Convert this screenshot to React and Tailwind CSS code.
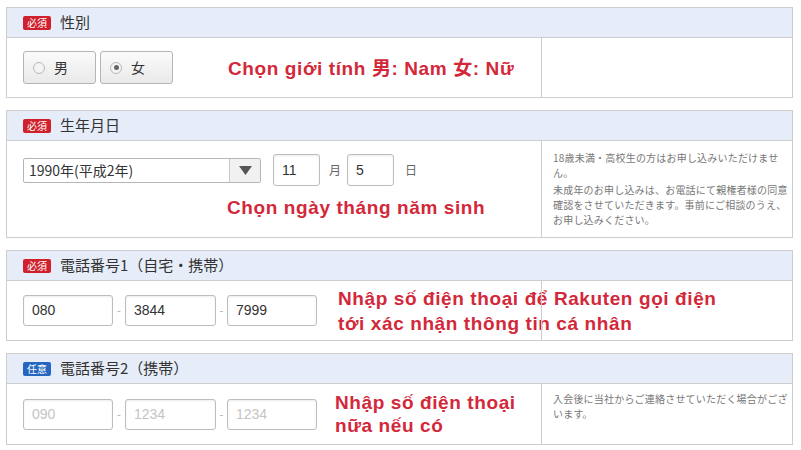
const JP = "font-['Noto_Sans_CJK_JP','Noto_Sans',sans-serif]";
const NOTE = "font-['Liberation_Sans','Noto_Sans_CJK_JP',sans-serif] font-bold text-[19px] tracking-[0.6px] text-[#d3283a] whitespace-nowrap";

function Badge({ kind }) {
  const req = kind === 'req';
  return (
    <span className={`inline-flex h-[14px] w-[28px] items-center justify-center rounded-[2px] text-[10px] leading-none text-white ${req ? 'bg-[#d0202c]' : 'bg-[#2466c0]'}`}>
      {req ? '必須' : '任意'}
    </span>
  );
}

function Section({ kind = 'req', title, body, note, bodyClass = '', noteClass = 'pt-[9px]' }) {
  return (
    <section className={`w-[787px] border border-[#cdcdcd] ${JP}`}>
      <header className="flex h-[30px] items-center gap-[9px] border-b border-[#cdcdcd] bg-[#e6edf8] pl-[16px]">
        <Badge kind={kind} />
        <h2 className="text-[15px] text-[#333]">{title}</h2>
      </header>
      <div className="grid grid-cols-[534px_1fr]">
        <div className={`pl-[16px] ${bodyClass}`}>{body}</div>
        <div className={`relative whitespace-nowrap border-l border-[#cdcdcd] pl-[11px] text-[10px] leading-[15px] tracking-[0.2px] text-[#777] ${noteClass}`}>{note}</div>
      </div>
    </section>
  );
}

function Radio({ label, checked }) {
  return (
    <label className="flex h-[33px] w-[73px] items-center gap-[9px] rounded-[3px] border border-[#b5b5b5] bg-gradient-to-b from-[#fbfbfb] to-[#e9e9e9] pl-[9px] text-[14px] text-[#333]">
      <span className="flex h-[12px] w-[12px] items-center justify-center rounded-full border border-[#b9b9b9] bg-[#f4f4f4]">
        {checked && <span className="h-[5px] w-[5px] rounded-full bg-[#666]" />}
      </span>
      {label}
    </label>
  );
}

function Field({ value, w = 'w-[90px]', h = 'h-[31px]', placeholder }) {
  return (
    <div className={`flex ${w} ${h} items-center rounded-[3px] border border-[#bdbdbd] bg-white pl-[8px] text-[14px] shadow-[inset_0_1px_2px_rgba(0,0,0,0.08)] ${placeholder ? 'text-[#c4c4c4]' : 'text-[#333]'} font-['Liberation_Sans','Noto_Sans_CJK_JP',sans-serif]`}>
      {value}
    </div>
  );
}

function Phone({ values, placeholder }) {
  return (
    <div className="flex items-center">
      <Field value={values[0]} placeholder={placeholder} />
      <span className="w-[12px] text-center text-[11px] text-[#aaa]">-</span>
      <Field value={values[1]} w="w-[91px]" placeholder={placeholder} />
      <span className="w-[11px] text-center text-[11px] text-[#aaa]">-</span>
      <Field value={values[2]} placeholder={placeholder} />
    </div>
  );
}

export default function App() {
  return (
    <div className="flex h-[450px] w-[801px] flex-col gap-[12px] bg-white pl-[6px] pt-[7px]">
      <Section
        title="性別"
        bodyClass="flex h-[59px] items-center"
        body={
          <>
            <div className="flex gap-[4px]">
              <Radio label="男" />
              <Radio label="女" checked />
            </div>
            <p className={`ml-[55px] ${NOTE} leading-none`}>
              Chọn giới tính <span className={JP}>男</span>: Nam <span className={JP}>女</span>: Nữ
            </p>
          </>
        }
      />

      <Section
        title="生年月日"
        bodyClass="h-[96px] pt-[13px]"
        body={
          <>
            <div className="flex items-center">
              <div className="flex h-[25px] w-[238px] items-stretch rounded-[2px] border border-[#b5b5b5] text-[14px] text-[#333]">
                <span className="flex flex-1 items-center pl-[5px]">1990年(平成2年)</span>
                <span className="flex w-[31px] items-center justify-center border-l border-[#c8c8c8] bg-[#f1f1f1]">
                  <svg width="13" height="9" viewBox="0 0 13 9"><path d="M0 0h13L6.5 9z" fill="#555" /></svg>
                </span>
              </div>
              <div className="ml-[12px]"><Field value="11" w="w-[47px]" h="h-[32px]" /></div>
              <span className="ml-[9px] mr-[6px] text-[12px] text-[#666]">月</span>
              <Field value="5" w="w-[47px]" h="h-[32px]" />
              <span className="ml-[11px] text-[12px] text-[#666]">日</span>
            </div>
            <p className={`ml-[204px] mt-[8px] ${NOTE}`}>Chọn ngày tháng năm sinh</p>
          </>
        }
        note={
          <>
            <p>18歳未満・高校生の方はお申し込みいただけませ<br />ん。</p>
            <p className="mt-[2px]">未成年のお申し込みは、お電話にて親権者様の同意<br />確認をさせていただきます。事前にご相談のうえ、<br />お申し込みください。</p>
          </>
        }
      />

      <Section
        title="電話番号1（自宅・携帯）"
        bodyClass="flex h-[59px] items-center"
        body={
          <>
            <Phone values={['080', '3844', '7999']} />
            <p className={`ml-[21px] ${NOTE} leading-[25px]`}>
              Nhập số điện thoại để Rakuten gọi điện
              <br />
              tới xác nhận thông tin cá nhân
            </p>
          </>
        }
      />

      <Section
        kind="opt"
        title="電話番号2（携帯）"
        bodyClass="flex h-[60px] items-center"
        noteClass="pt-[7px]"
        body={
          <>
            <Phone values={['090', '1234', '1234']} placeholder />
            <p className={`ml-[18px] ${NOTE} leading-[23px]`}>
              Nhập số điện thoại
              <br />
              nữa nếu có
            </p>
          </>
        }
        note={<p>入会後に当社からご連絡させていただく場合がござ<br />います。</p>}
      />
    </div>
  );
}
